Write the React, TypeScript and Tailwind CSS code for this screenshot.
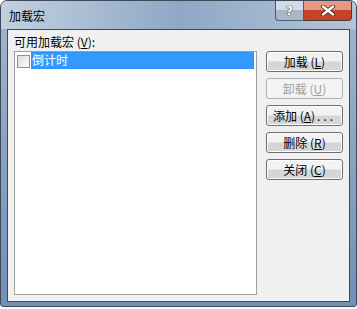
import React from 'react'

const font = { fontFamily: '"Noto Sans CJK SC", "Liberation Sans", sans-serif' }

function Btn({ label, hot, tail = '', disabled = false }: { label: string; hot: string; tail?: string; disabled?: boolean }) {
    return (
        <button
            className={
                disabled
                    ? "w-[77px] h-[21px] rounded-[3px] border border-[#adb2b5] bg-[#f4f4f4] text-[#a0a0a0] text-[12px] leading-none flex items-center justify-center"
                    : "w-[77px] h-[21px] rounded-[3px] border border-[#707070] bg-gradient-to-b from-[#f2f2f2] from-45% to-[#d6d6d6] to-55% text-black text-[12px] leading-none flex items-center justify-center shadow-[inset_0_0_0_1px_#fcfcfc]"
            }
        >
            {label} (<u>{hot}</u>){tail && <span className="tracking-[3px] ml-[2px]">{tail}</span>}
        </button>
    )
}

export default function App() {
    return (
        <div className="w-[357px] h-[309px] bg-white" style={font}>
            <div className="w-[357px] h-[307px] rounded-t-[7px] rounded-b-[3px] border border-[#3e4a5a] bg-gradient-to-b from-[#a3b6cd] to-[#7190b6] flex flex-col overflow-hidden">
                {/* title bar */}
                <div className="h-[28px] flex items-start justify-between bg-gradient-to-r from-[#c2d0e0] via-[#8fa8c6] to-[#b3c4d8]">
                    <span className="ml-[8px] mt-[8px] text-[12px] leading-[14px] text-black">加载宏</span>
                    <div className="flex mr-[4px]">
                        <div className="w-[29px] h-[20px] rounded-bl-[4px] border border-t-0 border-[#4b5a6d] bg-gradient-to-b from-[#d2dbe6] from-50% to-[#a9b8c9] to-50% flex items-center justify-center">
                            <span className="text-[13px] font-bold leading-none text-white [text-shadow:0_0_1px_#222,0_0_1px_#222]" style={{ fontFamily: '"DejaVu Sans", sans-serif' }}>?</span>
                        </div>
                        <div className="w-[48px] h-[20px] rounded-br-[4px] border border-l-0 border-t-0 border-[#4b3a36] bg-gradient-to-b from-[#e29a86] from-50% to-[#c6432a] to-50% flex items-center justify-center">
                            <svg width="14" height="11" viewBox="0 0 14 11">
                                <path d="M2 1.5 L12 9.5 M12 1.5 L2 9.5" stroke="#3a2a28" strokeWidth="4" strokeLinecap="round" />
                                <path d="M2 1.5 L12 9.5 M12 1.5 L2 9.5" stroke="#ffffff" strokeWidth="2.4" strokeLinecap="round" />
                            </svg>
                        </div>
                    </div>
                </div>
                {/* client */}
                <div className="flex-1 mx-[6px] mb-[4px] border border-[#3e4a5a] bg-[#f0f0f0] flex px-[6px] pt-[6px] pb-[6px] gap-[9px]">
                    <div className="flex flex-col">
                        <div className="h-[15px] text-[12px] leading-[12px] text-black">可用加载宏 (<u>V</u>):</div>
                        <div className="w-[243px] flex-1 border border-[#a0a0a0] bg-white">
                            <div className="flex items-start h-[17px]">
                                <div className="ml-[2px] mt-[3px] w-[13px] h-[13px] border border-[#8e8f8f] bg-gradient-to-br from-[#dcdcdc] to-[#ffffff]" />
                                <div className="ml-[1px] w-[223px] h-[17px] bg-[#3399ff] border border-dotted border-[#cc6600] text-white text-[12px] leading-[14px]">倒计时</div>
                            </div>
                        </div>
                    </div>
                    <div className="flex flex-col gap-[6px] pt-[15px]">
                        <Btn label="加载" hot="L" />
                        <Btn label="卸载" hot="U" disabled />
                        <Btn label="添加" hot="A" tail="..." />
                        <Btn label="删除" hot="R" />
                        <Btn label="关闭" hot="C" />
                    </div>
                </div>
            </div>
        </div>
    )
}
